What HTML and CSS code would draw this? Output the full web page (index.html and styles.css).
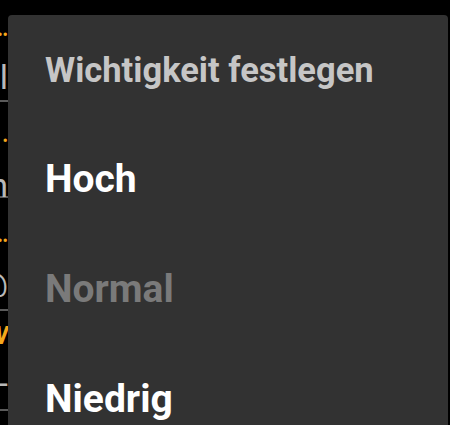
FILE: index.html
```html
<!DOCTYPE html>
<html lang="de">
<head>
<meta charset="utf-8">
<title>Wichtigkeit festlegen</title>
<link rel="stylesheet" href="styles.css">
</head>
<body>
<div class="screen">
  <div class="peek">
    <div class="row r1">
      <div class="meta"><span class="dots">•••</span></div>
      <div class="txt">Detail</div>
    </div>
    <div class="row r2">
      <div class="meta"><span class="dots">•</span></div>
      <div class="txt">Bach</div>
    </div>
    <div class="row r3">
      <div class="meta"><span class="dots">••</span></div>
      <div class="txt">@</div>
    </div>
    <div class="row r4">
      <div class="txt warn">W</div>
      <div class="txt dash">-</div>
    </div>
  </div>
  <div class="dialog">
    <div class="title">Wichtigkeit festlegen</div>
    <div class="item">Hoch</div>
    <div class="item disabled">Normal</div>
    <div class="item">Niedrig</div>
  </div>
</div>
</body>
</html>
```

FILE: styles.css
```css
html, body {
  margin: 0;
  padding: 0;
  background: #000;
  font-family: Roboto, "Noto Sans", sans-serif;
}
.screen {
  position: relative;
  width: 450px;
  height: 425px;
  overflow: hidden;
  background: #000;
}
.peek {
  width: 8px;
  overflow: hidden;
  display: flex;
  flex-direction: column;
}
.row {
  display: flex;
  flex-direction: column;
  border-bottom: 2px solid #5a5a5a;
  box-sizing: border-box;
}
.meta, .txt {
  display: flex;
  justify-content: flex-end;
  white-space: nowrap;
}
.dots {
  color: #f5a81c;
  font-size: 16px;
  line-height: 12px;
  letter-spacing: 0;
}
.txt {
  color: #b8b8b8;
  font-size: 34px;
  line-height: 36px;
}
.r1 { height: 102px; padding-top: 29px; }
.r1 .txt { margin-top: 18px; }
.r2 { height: 96px; padding-top: 33px; }
.r2 .txt { margin-top: 20px; }
.r3 { height: 113px; padding-top: 37px; }
.r3 .txt { margin-top: 20px; }
.r4 { height: 100px; padding-top: 6px; }
.warn { color: #f5a81c; font-style: italic; font-weight: 700; font-size: 26px; }
.dash { margin-top: 12px; }
.dialog {
  position: absolute;
  left: 8px;
  top: 15px;
  width: 440px;
  height: 430px;
  background: #323232;
  border-radius: 4px;
  box-sizing: border-box;
  padding: 35px 0 0 37px;
}
.title {
  color: #c6c6c6;
  font-size: 34.5px;
  line-height: 40px;
  font-weight: 700;
  margin-bottom: 34px;
}
.item {
  color: #fff;
  font-size: 39px;
  line-height: 110px;
  font-weight: 700;
}
.item.disabled {
  color: #7a7a7a;
}
```
